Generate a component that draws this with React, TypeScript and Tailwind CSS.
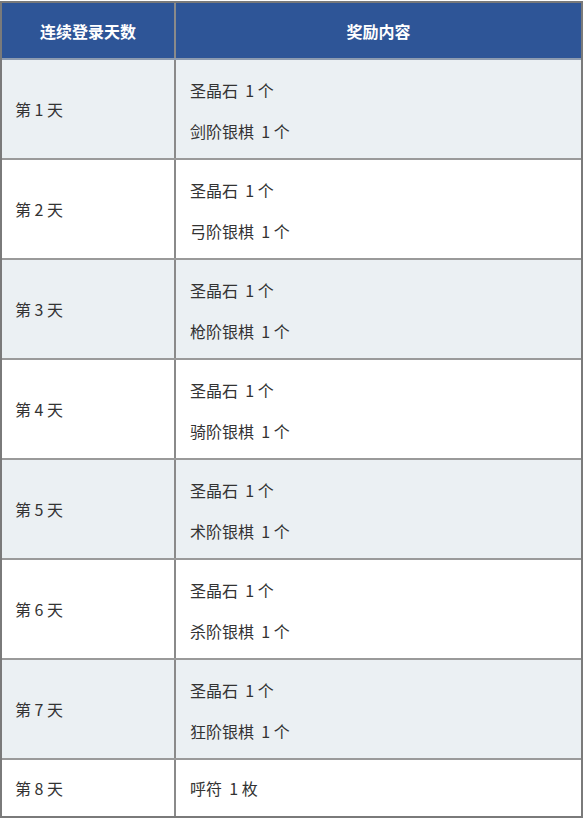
const rows: { day: string; items: string[] }[] = [
  { day: '第 1 天', items: ['圣晶石  1 个', '剑阶银棋  1 个'] },
  { day: '第 2 天', items: ['圣晶石  1 个', '弓阶银棋  1 个'] },
  { day: '第 3 天', items: ['圣晶石  1 个', '枪阶银棋  1 个'] },
  { day: '第 4 天', items: ['圣晶石  1 个', '骑阶银棋  1 个'] },
  { day: '第 5 天', items: ['圣晶石  1 个', '术阶银棋  1 个'] },
  { day: '第 6 天', items: ['圣晶石  1 个', '杀阶银棋  1 个'] },
  { day: '第 7 天', items: ['圣晶石  1 个', '狂阶银棋  1 个'] },
  { day: '第 8 天', items: ['呼符  1 枚'] },
]

export default function App() {
  return (
    <div
      className="w-[584px] h-[819px] bg-white pt-px text-[16px] text-[#333]"
      style={{ fontFamily: '"Noto Sans CJK SC", "Noto Sans", sans-serif' }}
    >
      <div className="w-[583px] border-2 border-[#7a7a7a]">
        <div className="grid grid-cols-[174px_1fr] h-[57px] bg-[#2e5597] text-white font-bold border-b-2 border-[#8d9bb0]">
          <div className="flex items-center justify-center border-r-2 border-[#8a8a8a]">连续登录天数</div>
          <div className="flex items-center justify-center">奖励内容</div>
        </div>
        {rows.map((row, i) => {
          const single = row.items.length === 1
          return (
            <div
              key={i}
              className={`grid grid-cols-[174px_1fr] ${i % 2 === 0 ? 'bg-[#ebf0f3]' : 'bg-white'} ${
                single ? '' : 'border-b-2 border-[#9a9a9a]'
              }`}
            >
              <div className="flex items-center pl-[13px] border-r-2 border-[#8a8a8a] whitespace-pre">
                {row.day}
              </div>
              <div
                className={`flex flex-col justify-center pl-[14px] ${
                  single ? 'h-[56px] pb-[1px]' : 'h-[98px] pt-[3px]'
                }`}
              >
                {row.items.map((item, j) => (
                  <div key={j} className="h-[41px] flex items-center whitespace-pre">
                    {item}
                  </div>
                ))}
              </div>
            </div>
          )
        })}
      </div>
    </div>
  )
}
